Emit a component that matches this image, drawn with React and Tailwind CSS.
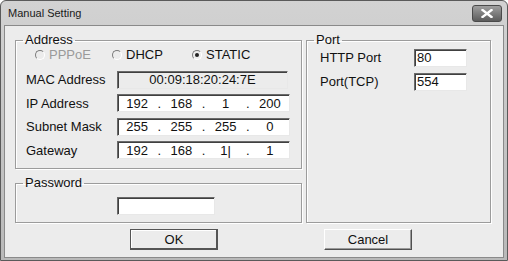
import React from 'react'

const font = { fontFamily: '"Liberation Sans", Arial, sans-serif' }

const sunken =
  'border border-t-[#6a6a6a] border-l-[#6a6a6a] border-b-[#e8e8e8] border-r-[#e8e8e8] shadow-[inset_1px_1px_0_#404040]'

function Radio({ label, checked, disabled }) {
  return (
    <div className={`flex items-center gap-[4px] ${disabled ? 'text-[#9a9a9a]' : 'text-[#111]'}`}>
      <span className="w-[10px] h-[10px] rounded-full border border-t-[#7a7a7a] border-l-[#7a7a7a] border-b-white border-r-white bg-[#ececec] flex items-center justify-center">
        {checked && <span className="w-[4px] h-[4px] rounded-full bg-[#222]" />}
      </span>
      <span>{label}</span>
    </div>
  )
}

function IpBox({ parts }) {
  return (
    <div className={`w-[173px] h-[18px] bg-white flex items-center text-[#111] ${sunken}`}>
      {parts.map((p, i) => (
        <React.Fragment key={i}>
          <span className="flex-1 text-center">{p}</span>
          {i < 3 && <span className="w-[6px] text-center">.</span>}
        </React.Fragment>
      ))}
    </div>
  )
}

function Row({ label, children }) {
  return (
    <div className="flex items-center h-[23.5px]">
      <span className="w-[101px] pl-[10px] text-[#111]">{label}</span>
      {children}
    </div>
  )
}

function Group({ title, className, children }) {
  return (
    <fieldset className={`border border-[#9c9c9c] shadow-[1px_1px_0_#fff,inset_1px_1px_0_#fff] ${className}`}>
      <legend className="ml-[7px] px-[2px] text-[#111] leading-[14px]">{title}</legend>
      {children}
    </fieldset>
  )
}

function Button({ label, isDefault }) {
  return (
    <button
      className={`w-[88px] h-[21px] bg-[#ececec] text-[#111] border ${
        isDefault
          ? 'border-[#555] shadow-[inset_-1px_-1px_0_#555,inset_1px_1px_0_#fff]'
          : 'border-t-white border-l-white border-b-[#505050] border-r-[#505050] shadow-[inset_-1px_-1px_0_#9a9a9a]'
      }`}
    >
      {label}
    </button>
  )
}

export default function App() {
  return (
    <div
      style={font}
      className="w-[508px] h-[261px] text-[13px] bg-gradient-to-b from-[#d2d2d2] to-[#b9b9b9] border border-[#5a5a5a] rounded-t-[6px] flex flex-col overflow-hidden"
    >
      <div className="h-[24px] flex items-center justify-between pl-[7px] pr-[5px]">
        <span className="text-[#1a1a1a] text-[11px]">Manual Setting</span>
        <div className="w-[30px] h-[17px] rounded-[3px] border border-[#4a4a4a] bg-gradient-to-b from-[#a0a0a0] to-[#5c5c5c] flex items-center justify-center">
          <svg width="12" height="9" viewBox="0 0 12 9">
            <path d="M1.5 1 L10.5 8 M10.5 1 L1.5 8" stroke="#fff" strokeWidth="2.4" strokeLinecap="square" />
          </svg>
        </div>
      </div>
      <div className="flex-1 mx-[3px] mb-[2px] bg-[#ececec] border border-[#8a8a8a] flex flex-col">
        <div className="flex gap-[4px] pl-[10px] pt-[7px]">
          <div className="flex flex-col gap-[7px]">
            <Group title="Address" className="w-[287px] h-[136px]">
              <div className="flex items-center h-[16px] pl-[19px] mb-[5px]">
                <div className="w-[77px]"><Radio label="PPPoE" disabled /></div>
                <div className="w-[80px]"><Radio label="DHCP" /></div>
                <Radio label="STATIC" checked />
              </div>
              <Row label="MAC Address">
                <div className={`w-[171px] h-[18px] bg-[#ececec] flex items-center justify-center text-[#111] ${sunken}`}>
                  00:09:18:20:24:7E
                </div>
              </Row>
              <Row label="IP Address"><IpBox parts={['192', '168', '1', '200']} /></Row>
              <Row label="Subnet Mask"><IpBox parts={['255', '255', '255', '0']} /></Row>
              <Row label="Gateway"><IpBox parts={['192', '168', '1|', '1']} /></Row>
            </Group>
            <Group title="Password" className="w-[287px] h-[47px]">
              <div className="flex pt-[7px] pl-[101px]">
                <div className={`w-[98px] h-[18px] bg-white ${sunken}`} />
              </div>
            </Group>
          </div>
          <Group title="Port" className="w-[185px] h-[190px]">
            <div className="flex flex-col gap-[6px] pt-[2px]">
              <div className="flex items-center h-[18px]">
                <span className="w-[107px] pl-[13px] text-[#111]">HTTP Port</span>
                <div className={`w-[53px] h-[18px] bg-white pl-[2px] leading-[16px] text-[#111] ${sunken}`}>80</div>
              </div>
              <div className="flex items-center h-[18px]">
                <span className="w-[107px] pl-[13px] text-[#111]">Port(TCP)</span>
                <div className={`w-[53px] h-[18px] bg-white pl-[2px] leading-[16px] text-[#111] ${sunken}`}>554</div>
              </div>
            </div>
          </Group>
        </div>
        <div className="flex pt-[6px]">
          <div className="ml-[125px]"><Button label="OK" isDefault /></div>
          <div className="ml-[106px]"><Button label="Cancel" /></div>
        </div>
      </div>
    </div>
  )
}
